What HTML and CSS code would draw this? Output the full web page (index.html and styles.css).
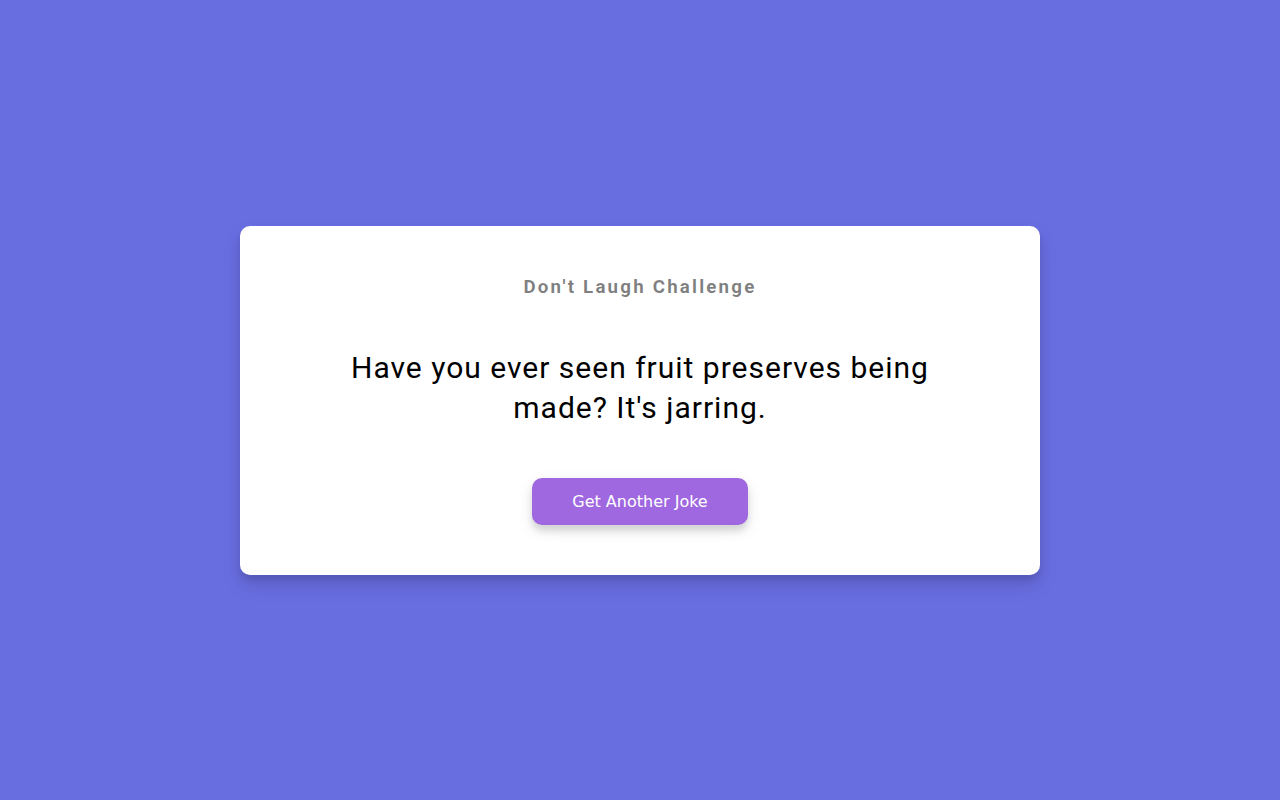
FILE: index.html
```html
<!DOCTYPE html>
<html lang="en">
<head>
<meta charset="UTF-8">
<title>Don't Laugh Challenge</title>
<link rel="stylesheet" href="styles.css">
</head>
<body>
<div class="container">
  <h3 class="title">Don't Laugh Challenge</h3>
  <div class="joke">Have you ever seen fruit preserves being made? It's jarring.</div>
  <button class="btn">Get Another Joke</button>
</div>
</body>
</html>
```

FILE: styles.css
```css
* { box-sizing: border-box; }
html, body { height: 100%; }
body {
  margin: 0;
  background: #686de0;
  font-family: Roboto, sans-serif;
  display: flex;
  align-items: center;
  justify-content: center;
}
.container {
  width: 800px;
  background: #fff;
  border-radius: 10px;
  padding: 50px 100px;
  text-align: center;
  box-shadow: 0 10px 20px rgba(0,0,0,0.1), 0 6px 6px rgba(0,0,0,0.1);
}
.title {
  margin: 0;
  font-size: 18.72px;
  font-weight: 700;
  letter-spacing: 2.2px;
  color: rgba(0,0,0,0.5);
}
.joke {
  margin: 50px 0;
  font-size: 30px;
  line-height: 40px;
  letter-spacing: 1px;
  color: #000;
}
.btn {
  background: #9f68e0;
  color: #fff;
  border: 0;
  border-radius: 10px;
  padding: 14px 40px;
  font-family: "DejaVu Sans", sans-serif;
  font-size: 16px;
  box-shadow: 0 5px 15px rgba(0,0,0,0.1), 0 6px 6px rgba(0,0,0,0.1);
  cursor: pointer;
}
```
